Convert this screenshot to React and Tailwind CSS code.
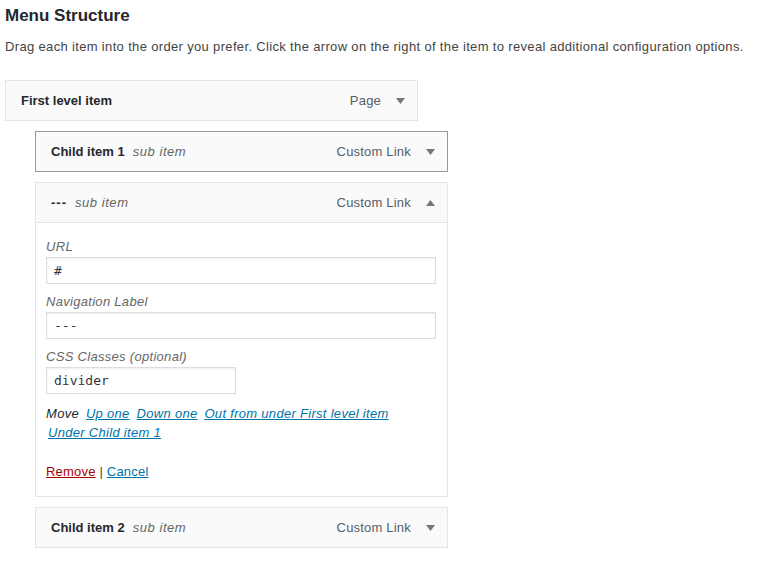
import React from "react";

const font = { fontFamily: '"Liberation Sans", Arial, sans-serif' };

function Arrow({ up }) {
  return (
    <svg width="9" height="6" viewBox="0 0 9 6" className="block">
      {up ? (
        <polygon points="0,6 9,6 4.5,0" fill="#72777c" />
      ) : (
        <polygon points="0,0 9,0 4.5,6" fill="#72777c" />
      )}
    </svg>
  );
}

function Handle({ title, sub, type, up, dark, dashes }) {
  return (
    <div
      className={`flex h-[41px] items-center border bg-[#fafafa] pl-[15px] pr-[12px] ${
        dark ? "border-[#999]" : "border-[#e5e5e5]"
      }`}
    >
      <span
        className={`text-[13px] font-semibold text-[#23282d] ${dashes ? "tracking-[1px]" : ""}`}
      >
        {title}
      </span>
      {sub && (
        <span className="ml-[8px] text-[13px] italic tracking-[0.55px] text-[#666]">{sub}</span>
      )}
      <span className="ml-auto text-[13px] tracking-[0.2px] text-[#555d66]">{type}</span>
      <span className="ml-[15px] flex w-[9px] justify-center">
        <Arrow up={up} />
      </span>
    </div>
  );
}

function Field({ label, value, narrow }) {
  return (
    <div className="mb-[9px]">
      <div className="text-[13px] italic leading-[18px] tracking-[0.3px] text-[#666]">{label}</div>
      <div
        className={`mt-[1px] flex h-[27px] items-center border border-[#ddd] bg-white pl-[7px] shadow-[inset_0_1px_2px_rgba(0,0,0,0.07)] ${
          narrow ? "w-[190px]" : "w-[390px]"
        }`}
      >
        <span
          className="text-[13px] text-[#32373c]"
          style={{ fontFamily: '"DejaVu Sans Mono", monospace' }}
        >
          {value}
        </span>
      </div>
    </div>
  );
}

export default function App() {
  return (
    <div className="min-h-[565px] w-[759px] bg-white px-[5px]" style={font}>
      <h2 className="pt-[4px] text-[17px] font-semibold leading-[24px] text-[#23282d]">
        Menu Structure
      </h2>
      <p className="mt-[10px] whitespace-nowrap text-[13px] leading-[18px] tracking-[0.34px] text-[#444]">
        Drag each item into the order you prefer. Click the arrow on the right of the item to
        reveal additional configuration options.
      </p>

      <div className="mt-[24px] w-[413px]">
        <Handle title="First level item" type="Page" />
      </div>

      <div className="ml-[30px] mt-[10px] w-[413px]">
        <Handle title="Child item 1" sub="sub item" type="Custom Link" dark />
      </div>

      <div className="ml-[30px] mt-[10px] w-[413px]">
        <Handle title="---" sub="sub item" type="Custom Link" up dashes />
        <div className="border border-t-0 border-[#e5e5e5] bg-white px-[10px] pb-[15px] pt-[15px]">
          <Field label="URL" value="#" />
          <Field label="Navigation Label" value="---" />
          <Field label="CSS Classes (optional)" value="divider" narrow />
          <div className="mt-[10px] text-[13px] italic leading-[19px] tracking-[0.3px] text-[#23282d]">
            <span>Move</span>{" "}
            <a className="ml-[3px] text-[#0073aa] underline">Up one</a>{" "}
            <a className="ml-[3px] text-[#0073aa] underline">Down one</a>{" "}
            <a className="ml-[3px] text-[#0073aa] underline">Out from under First level item</a>
            <br />
            <a className="ml-[2px] text-[#0073aa] underline">Under Child item 1</a>
          </div>
          <div className="mt-[21px] text-[13px] leading-[18px] tracking-[0.2px] text-[#444]">
            <a className="text-[#a00] underline">Remove</a> |{" "}
            <a className="text-[#0073aa] underline">Cancel</a>
          </div>
        </div>
      </div>

      <div className="ml-[30px] mt-[10px] w-[413px]">
        <Handle title="Child item 2" sub="sub item" type="Custom Link" />
      </div>
    </div>
  );
}
